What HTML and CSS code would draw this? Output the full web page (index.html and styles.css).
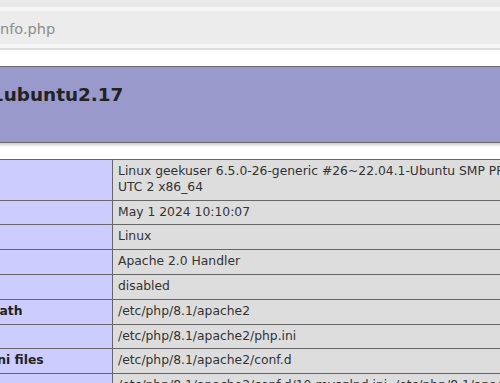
FILE: index.html
```html
<!DOCTYPE html>
<html lang="en">
<head>
    <meta charset="UTF-8">
    <meta name="viewport" content="width=device-width, initial-scale=1.0">
    <title>phpinfo()</title>
    <link rel="stylesheet" href="styles.css">
</head>
<body>
    <div class="tabs"></div>
    <div class="toolbar">
        <div class="urlbar"><span class="url">info.php</span></div>
    </div>

    <div class="page">
        <div class="center">
            <div class="top">
                <h1>PHP Version 8.1.2-1ubuntu2.17</h1>
            </div>

            <table class="info">
                <tr><td class="e">System </td><td class="v">Linux geekuser 6.5.0-26-generic #26~22.04.1-Ubuntu SMP PREEMPT_DYNAMIC Tue Mar 12 10:22:43 UTC 2 x86_64 </td></tr>
                <tr><td class="e">Build Date </td><td class="v">May 1 2024 10:10:07 </td></tr>
                <tr><td class="e">Build System </td><td class="v">Linux </td></tr>
                <tr><td class="e">Server API </td><td class="v">Apache 2.0 Handler </td></tr>
                <tr><td class="e">Virtual Directory Support </td><td class="v">disabled </td></tr>
                <tr><td class="e">Configuration File (php.ini) Path </td><td class="v">/etc/php/8.1/apache2 </td></tr>
                <tr><td class="e">Loaded Configuration File </td><td class="v">/etc/php/8.1/apache2/php.ini </td></tr>
                <tr><td class="e">Scan this dir for additional .ini files </td><td class="v">/etc/php/8.1/apache2/conf.d </td></tr>
                <tr><td class="e">Additional .ini files parsed </td><td class="v">/etc/php/8.1/apache2/conf.d/10-mysqlnd.ini, /etc/php/8.1/apache2/conf.d/10-opcache.ini, /etc/php/8.1/apache2/conf.d/10-pdo.ini </td></tr>
            </table>
        </div>
    </div>
</body>
</html>
```
FILE: styles.css
```css
body
{
    margin: 0;
    overflow: hidden;
    background: #fff;
    color: #222;
    font-family: "DejaVu Sans", sans-serif;
}

/* browser toolbar */
.tabs
{
    height: 7px;
    background: #e9e9e9;
}
.toolbar
{
    padding: 4px 0;
    background: #f6f6f6;
    border-bottom: 2px solid #dedede;
}
.urlbar
{
    height: 33px;
    box-sizing: border-box;
    padding-top: 3px;
    line-height: 31px;
    background: #ececec;
    color: #8d8d8d;
    font-size: 14.5px;
    white-space: nowrap;
    overflow: hidden;
}
.url
{
    margin-left: -4px;
}

/* phpinfo page, scrolled sideways */
.page
{
    padding-top: 16px;
}
.center
{
    width: 970px;
    margin-left: -208px;
}
.top
{
    height: 75px;
    box-sizing: content-box;
    background: #99c;
    border: 1px solid #666;
    box-shadow: 1px 2px 3px #ccc;
}
.top h1
{
    margin: 0;
    padding: 17px 5px 0;
    font-size: 18.4px;
    line-height: 22px;
    white-space: nowrap;
}
.info
{
    width: 970px;
    margin-top: 16px;
    border-collapse: collapse;
    table-layout: fixed;
    box-shadow: 1px 2px 3px #ccc;
}
.info td
{
    border: 1px solid #666;
    padding: 4px 5px;
    font-size: 12.35px;
    line-height: 15.8px;
    vertical-align: baseline;
}
.e
{
    width: 309px;
    background: #ccf;
    font-weight: bold;
}
.v
{
    background: #ddd;
    color: #333;
    word-wrap: break-word;
}
```
